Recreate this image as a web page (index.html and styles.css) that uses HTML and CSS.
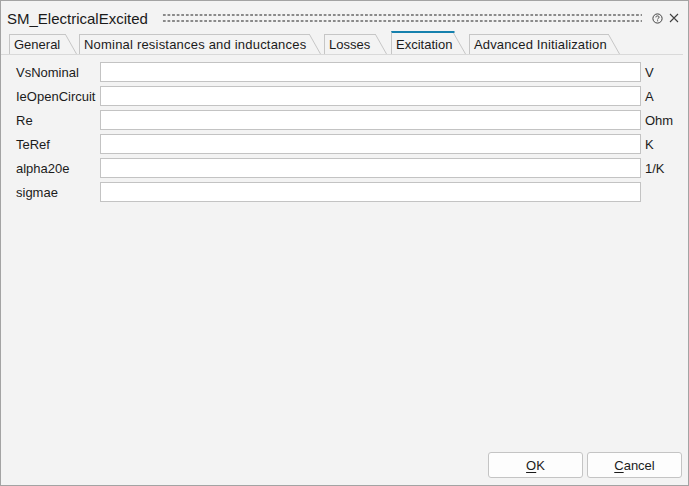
FILE: index.html
```html
<!DOCTYPE html>
<html>
<head>
<meta charset="utf-8">
<link rel="stylesheet" href="styles.css">
</head>
<body>
<div class="window">
  <div class="titlebar">
    <span class="title">SM_ElectricalExcited</span>
    <span class="grip"></span>
    <svg class="help" width="11" height="11" viewBox="0 0 11 11">
      <circle cx="5.5" cy="5.5" r="4.6" fill="none" stroke="#404040" stroke-width="1"/>
      <path d="M3.9 4.3 C3.9 3.3 4.6 2.9 5.5 2.9 C6.4 2.9 7.1 3.4 7.1 4.2 C7.1 5.2 5.6 5.3 5.6 6.4" fill="none" stroke="#404040" stroke-width="1"/>
      <rect x="5.1" y="7.3" width="1" height="1" fill="#404040"/>
    </svg>
    <svg class="close" width="10" height="10" viewBox="0 0 10 10">
      <path d="M1 1 L9 9 M9 1 L1 9" stroke="#404040" stroke-width="1.1"/>
    </svg>
  </div>
  <div class="tabbar">
    <div class="tab t-general"><span class="tab-label">General</span><svg class="slant" width="12" height="20" viewBox="0 0 12 20"><path d="M0.5 0.5 L11.5 20" stroke="#c6c6c6" fill="none"/></svg></div>
    <div class="tab t-nominal"><span class="tab-label">Nominal resistances and inductances</span><svg class="slant" width="12" height="20" viewBox="0 0 12 20"><path d="M0.5 0.5 L11.5 20" stroke="#c6c6c6" fill="none"/></svg></div>
    <div class="tab t-losses"><span class="tab-label">Losses</span><svg class="slant" width="12" height="20" viewBox="0 0 12 20"><path d="M0.5 0.5 L11.5 20" stroke="#c6c6c6" fill="none"/></svg></div>
    <div class="tab active t-excitation"><span class="tab-label">Excitation</span><svg class="slant" width="13" height="23" viewBox="0 0 13 23"><path d="M0 1 L1.5 1" stroke="#1580ad" stroke-width="2"/><path d="M0.5 2 L12.5 23" stroke="#c6c6c6" fill="none"/></svg></div>
    <div class="tab t-advanced"><span class="tab-label">Advanced Initialization</span><svg class="slant" width="12" height="20" viewBox="0 0 12 20"><path d="M0.5 0.5 L11.5 20" stroke="#c6c6c6" fill="none"/></svg></div>
  </div>
  <div class="form">
    <label class="lbl">VsNominal</label><div class="field"></div><span class="unit">V</span>
    <label class="lbl">IeOpenCircuit</label><div class="field"></div><span class="unit">A</span>
    <label class="lbl">Re</label><div class="field"></div><span class="unit">Ohm</span>
    <label class="lbl">TeRef</label><div class="field"></div><span class="unit">K</span>
    <label class="lbl">alpha20e</label><div class="field"></div><span class="unit">1/K</span>
    <label class="lbl">sigmae</label><div class="field"></div><span class="unit"></span>
  </div>
  <div class="buttons">
    <button class="btn"><u>O</u>K</button>
    <button class="btn"><u>C</u>ancel</button>
  </div>
</div>
</body>
</html>
```

FILE: styles.css
```css
html, body {
  margin: 0;
  padding: 0;
  background: #f3f3f3;
}
body {
  font-family: "Liberation Sans", Arial, sans-serif;
  color: #1b1b1b;
}
.window {
  width: 689px;
  height: 486px;
  box-sizing: border-box;
  border: 1px solid #a3a3a3;
  background: #f3f3f3;
  display: flex;
  flex-direction: column;
}
.titlebar {
  height: 30px;
  box-sizing: border-box;
  display: flex;
  align-items: flex-start;
  padding: 9px 0 0 6px;
}
.title {
  font-size: 15px;
  line-height: 17px;
  color: #1a1a1a;
}
.grip {
  flex: 1;
  height: 12px;
  margin: 2px 7px 0 14px;
  background-image: radial-gradient(circle at center, #8a8a8a 1.05px, rgba(138,138,138,0) 1.45px);
  background-size: 4.6px 6px;
}
.help {
  margin: 3px 0 0 3px;
}
.close {
  margin: 3px 9px 0 6px;
}
.tabbar {
  display: flex;
  align-items: flex-end;
  height: 24px;
  box-sizing: border-box;
  padding-left: 8px;
  margin-right: 5px;
  border-bottom: 1px solid #d9d9d9;
}
.tab {
  display: flex;
  align-items: flex-start;
  height: 20px;
  margin-right: 2px;
  font-size: 13px;
}
.tab-label {
  height: 20px;
  box-sizing: border-box;
  border-left: 1px solid #c6c6c6;
  border-top: 1px solid #c6c6c6;
  padding: 2px 0 0 4px;
  line-height: 15px;
  white-space: nowrap;
}
.t-general .tab-label { width: 57px; }
.t-nominal .tab-label { width: 231px; padding-left: 4px; letter-spacing: 0.2px; }
.t-losses .tab-label { width: 52px; }
.t-excitation .tab-label { width: 63px; }
.t-advanced .tab-label { width: 140px; letter-spacing: 0.15px; }
.t-nominal { margin-right: 3px; }
.t-losses { margin-right: 4px; }
.slant {
  display: block;
  margin-left: -1px;
}
.tab.active {
  height: 23px;
  margin-right: 3px;
}
.tab.active .tab-label {
  height: 23px;
  border-top: 2px solid #1580ad;
  padding-top: 4px;
}
.form {
  display: grid;
  grid-template-columns: 84px 541px auto;
  grid-auto-rows: 20px;
  row-gap: 4px;
  align-items: center;
  padding: 7px 0 0 15px;
  font-size: 13px;
}
.lbl {
  white-space: nowrap;
}
.field {
  height: 20px;
  box-sizing: border-box;
  border: 1px solid #c3c3c3;
  background: #ffffff;
}
.unit {
  white-space: nowrap;
  padding-left: 4px;
}
.buttons {
  margin-top: auto;
  display: flex;
  justify-content: flex-end;
  gap: 4px;
  padding: 0 6px 7px 0;
}
.btn {
  width: 95px;
  height: 26px;
  box-sizing: border-box;
  border: 1px solid #c4c4c4;
  border-radius: 3px;
  background: #fdfdfd;
  font-family: "Liberation Sans", Arial, sans-serif;
  font-size: 13px;
  color: #1b1b1b;
  padding: 0;
}
.btn u {
  text-decoration-thickness: 1px;
  text-underline-offset: 2px;
}
```
